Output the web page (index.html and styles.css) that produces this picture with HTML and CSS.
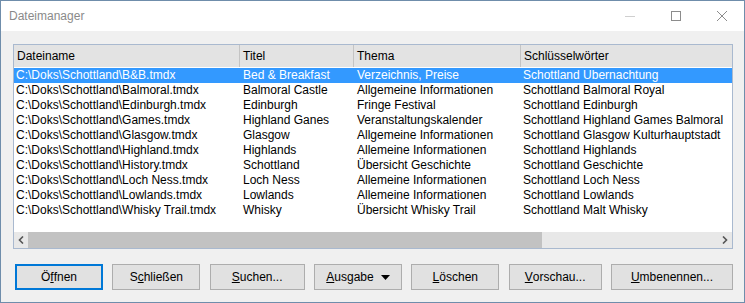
FILE: index.html
```html
<!DOCTYPE html>
<html lang="de">
  <head>
    <meta charset="UTF-8" />
    <title>Dateimanager</title>
    <link rel="stylesheet" href="styles.css">
  </head>
  <body>
    <div class="window">
      <div class="titlebar">
        <span class="title">Dateimanager</span>
        <div class="caption-buttons">
          <svg class="cap cap-min" width="10" height="10" viewBox="0 0 10 10"><path d="M0 5.5h10" stroke="#cfcfcf" stroke-width="1"/></svg>
          <svg class="cap" width="10" height="10" viewBox="0 0 10 10"><rect x="0.5" y="0.5" width="9" height="9" fill="none" stroke="#8c8c8c"/></svg>
          <svg class="cap" width="10" height="10" viewBox="0 0 10 10"><path d="M0 0L10 10M10 0L0 10" stroke="#8c8c8c" stroke-width="1"/></svg>
        </div>
      </div>

      <div class="content">
        <div class="listview">
          <div class="list-header">
            <div class="cell c1">Dateiname</div>
            <div class="cell c2">Titel</div>
            <div class="cell c3">Thema</div>
            <div class="cell c4">Schlüsselwörter</div>
          </div>

          <div class="rows">
            <div class="row selected">
              <div class="cell c1">C:\Doks\Schottland\B&amp;B.tmdx</div>
              <div class="cell c2">Bed &amp; Breakfast</div>
              <div class="cell c3">Verzeichnis, Preise</div>
              <div class="cell c4">Schottland Ubernachtung</div>
            </div>
            <div class="row">
              <div class="cell c1">C:\Doks\Schottland\Balmoral.tmdx</div>
              <div class="cell c2">Balmoral Castle</div>
              <div class="cell c3">Allgemeine Informationen</div>
              <div class="cell c4">Schottland Balmoral Royal</div>
            </div>
            <div class="row">
              <div class="cell c1">C:\Doks\Schottland\Edinburgh.tmdx</div>
              <div class="cell c2">Edinburgh</div>
              <div class="cell c3">Fringe Festival</div>
              <div class="cell c4">Schottland Edinburgh</div>
            </div>
            <div class="row">
              <div class="cell c1">C:\Doks\Schottland\Games.tmdx</div>
              <div class="cell c2">Highland Ganes</div>
              <div class="cell c3">Veranstaltungskalender</div>
              <div class="cell c4">Schottland Highland Games Balmoral</div>
            </div>
            <div class="row">
              <div class="cell c1">C:\Doks\Schottland\Glasgow.tmdx</div>
              <div class="cell c2">Glasgow</div>
              <div class="cell c3">Allgemeine Informationen</div>
              <div class="cell c4">Schottland Glasgow Kulturhauptstadt</div>
            </div>
            <div class="row">
              <div class="cell c1">C:\Doks\Schottland\Highland.tmdx</div>
              <div class="cell c2">Highlands</div>
              <div class="cell c3">Allemeine Informationen</div>
              <div class="cell c4">Schottland Highlands</div>
            </div>
            <div class="row">
              <div class="cell c1">C:\Doks\Schottland\History.tmdx</div>
              <div class="cell c2">Schottland</div>
              <div class="cell c3">Übersicht Geschichte</div>
              <div class="cell c4">Schottland Geschichte</div>
            </div>
            <div class="row">
              <div class="cell c1">C:\Doks\Schottland\Loch Ness.tmdx</div>
              <div class="cell c2">Loch Ness</div>
              <div class="cell c3">Allemeine Informationen</div>
              <div class="cell c4">Schottland Loch Ness</div>
            </div>
            <div class="row">
              <div class="cell c1">C:\Doks\Schottland\Lowlands.tmdx</div>
              <div class="cell c2">Lowlands</div>
              <div class="cell c3">Allemeine Informationen</div>
              <div class="cell c4">Schottland Lowlands</div>
            </div>
            <div class="row">
              <div class="cell c1">C:\Doks\Schottland\Whisky Trail.tmdx</div>
              <div class="cell c2">Whisky</div>
              <div class="cell c3">Übersicht Whisky Trail</div>
              <div class="cell c4">Schottland Malt Whisky</div>
            </div>
          </div>

          <div class="hscroll">
            <div class="arrow">
              <svg width="6" height="8" viewBox="0 0 6 8"><path d="M5 0.5L1.5 4L5 7.5" fill="none" stroke="#555" stroke-width="1.6"/></svg>
            </div>
            <div class="track">
              <div class="thumb"></div>
            </div>
            <div class="arrow">
              <svg width="6" height="8" viewBox="0 0 6 8"><path d="M1 0.5L4.5 4L1 7.5" fill="none" stroke="#555" stroke-width="1.6"/></svg>
            </div>
          </div>
        </div>

        <div class="buttons">
          <button class="btn focused w88">Ö<u>f</u>fnen</button>
          <button class="btn w88">S<u>c</u>hließen</button>
          <button class="btn w95"><u>S</u>uchen...</button>
          <button class="btn w88"><u>A</u>usgabe
            <svg class="drop" width="9" height="5" viewBox="0 0 9 5"><path d="M0 0h9L4.5 5z" fill="#000"/></svg>
          </button>
          <button class="btn w88"><u>L</u>öschen</button>
          <button class="btn w93"><u>V</u>orschau...</button>
          <button class="btn w122"><u>U</u>mbenennen...</button>
        </div>
      </div>
    </div>
  </body>
</html>
```

FILE: styles.css
```css
* {
  box-sizing: border-box;
}
body {
  margin: 0;
  font-family: "Liberation Sans", Arial, sans-serif;
  font-size: 12px;
  color: #000;
}
.window {
  width: 745px;
  height: 303px;
  border: 1px solid #6f8dab;
  background-color: #f0f0f0;
  display: flex;
  flex-direction: column;
}
.titlebar {
  height: 30px;
  background-color: #fff;
  display: flex;
  align-items: center;
  justify-content: space-between;
  padding-left: 8px;
}
.title {
  color: #8a8a8a;
  font-size: 12px;
}
.caption-buttons {
  display: flex;
  gap: 36px;
  padding-right: 17px;
  margin-top: -1px;
}
.cap {
  display: block;
}
.content {
  flex: 1;
  padding: 13px 11px 0 12px;
}
.listview {
  height: 205px;
  border: 1px solid #a9b9cf;
  background-color: #fff;
  display: flex;
  flex-direction: column;
}
.list-header {
  height: 22px;
  display: flex;
  background-color: #e3e3e3;
}
.list-header .cell {
  line-height: 22px;
  border-right: 1px solid #c4c4c4;
  padding-left: 3px;
}
.list-header .c4 {
  border-right: none;
}
.rows {
  flex: 1;
  padding-top: 1px;
}
.row {
  display: flex;
  height: 15px;
  line-height: 15px;
}
.row.selected {
  background-color: #3399ff;
  color: #fff;
}
.cell {
  white-space: nowrap;
  overflow: hidden;
  padding-left: 2px;
}
.c1 {
  width: 226px;
}
.c2 {
  width: 114px;
}
.c3 {
  width: 167px;
}
.c4 {
  flex: 1;
}
.row .c2,
.row .c3 {
  padding-left: 3px;
}
.hscroll {
  height: 16px;
  display: flex;
  background-color: #e8e8e8;
}
.arrow {
  width: 14px;
  display: flex;
  align-items: center;
  justify-content: center;
}
.track {
  flex: 1;
}
.thumb {
  width: 514px;
  height: 100%;
  background-color: #c2c2c2;
}
.buttons {
  display: flex;
  justify-content: space-between;
  margin-top: 15px;
  padding-left: 2px;
  padding-right: 0;
}
.btn {
  height: 26px;
  background-color: #e1e1e1;
  border: 1px solid #adadad;
  font-family: inherit;
  font-size: 12px;
  color: #000;
  padding: 0;
  display: flex;
  align-items: center;
  justify-content: center;
}
.btn.focused {
  border: 2px solid #0078d7;
}
.drop {
  margin-left: 7px;
}
.w88 {
  width: 88px;
}
.w93 {
  width: 93px;
}
.w95 {
  width: 95px;
}
.w122 {
  width: 122px;
}
```
